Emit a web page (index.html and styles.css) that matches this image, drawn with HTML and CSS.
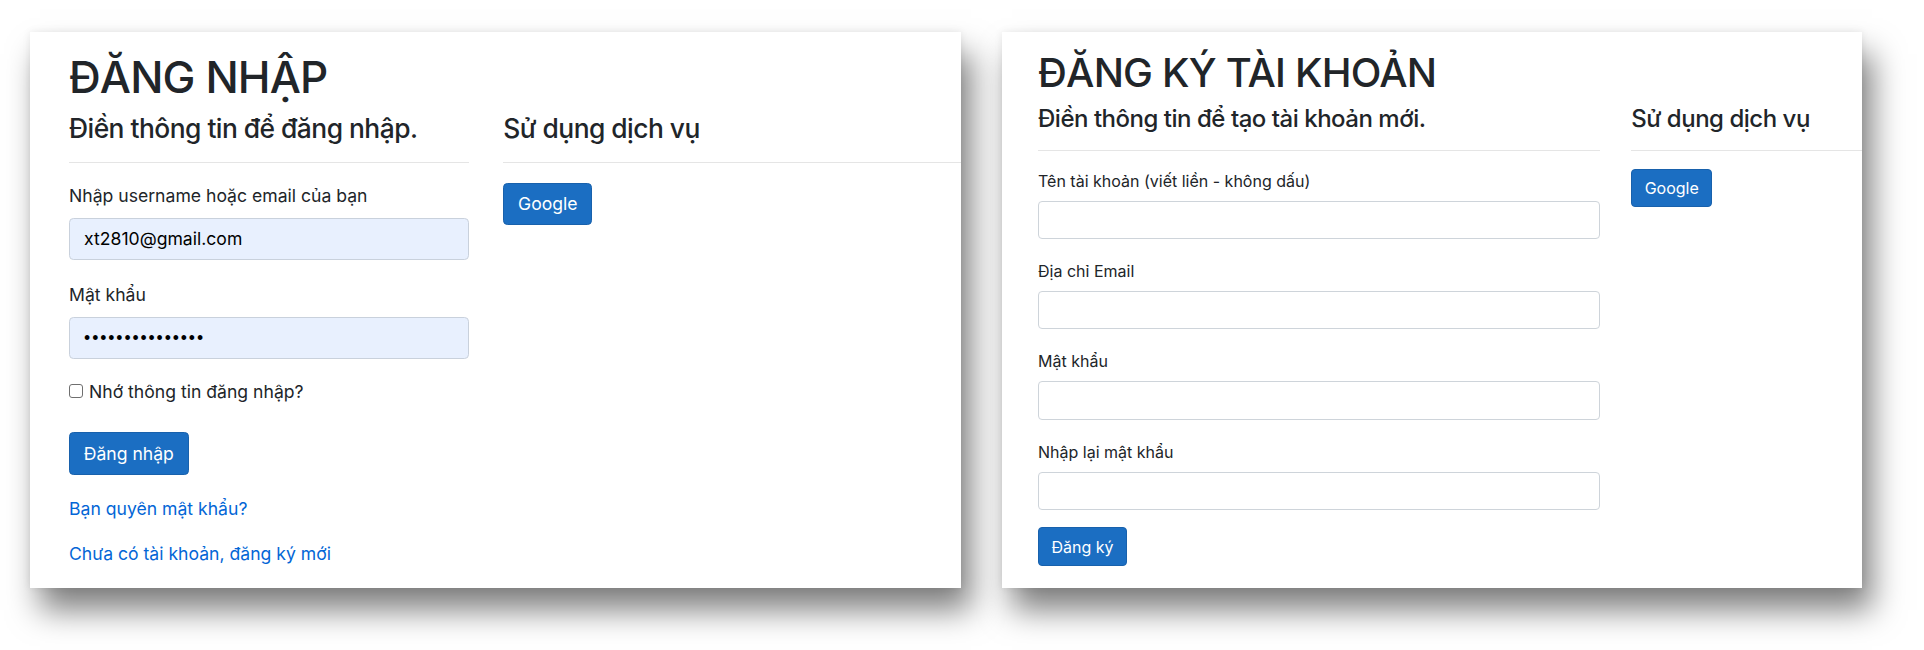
FILE: index.html
```html
<!DOCTYPE html>
<html lang="vi">
<head>
<meta charset="utf-8">
<title>Đăng nhập / Đăng ký</title>
<link rel="stylesheet" href="styles.css">
</head>
<body>
<div class="stage">
  <section class="shot shot--login">
    <h1 class="title">ĐĂNG NHẬP</h1>
    <div class="row">
      <div class="col col--main">
        <h4 class="subtitle">Điền thông tin để đăng nhập.</h4>
        <hr class="rule">
        <form class="form">
          <div class="field">
            <label class="label">Nhập username hoặc email của bạn</label>
            <input class="input input--filled" type="text" value="xt2810@gmail.com">
          </div>
          <div class="field">
            <label class="label">Mật khẩu</label>
            <input class="input input--filled input--secret" type="password" value="passwordpasswor">
          </div>
          <label class="check"><input class="check__box" type="checkbox">Nhớ thông tin đăng nhập?</label>
          <div class="actions actions--login">
            <button class="btn" type="button">Đăng nhập</button>
          </div>
          <div class="links">
            <p class="links__item"><a class="link" href="#">Bạn quyên mật khẩu?</a></p>
            <p class="links__item"><a class="link" href="#">Chưa có tài khoản, đăng ký mới</a></p>
          </div>
        </form>
      </div>
      <div class="col col--side">
        <h4 class="subtitle">Sử dụng dịch vụ</h4>
        <hr class="rule">
        <button class="btn" type="button">Google</button>
      </div>
    </div>
  </section>

  <section class="shot shot--register">
    <h1 class="title">ĐĂNG KÝ TÀI KHOẢN</h1>
    <div class="row">
      <div class="col col--main">
        <h4 class="subtitle">Điền thông tin để tạo tài khoản mới.</h4>
        <hr class="rule">
        <form class="form">
          <div class="field">
            <label class="label">Tên tài khoản (viết liền - không dấu)</label>
            <input class="input" type="text">
          </div>
          <div class="field">
            <label class="label">Địa chỉ Email</label>
            <input class="input" type="text">
          </div>
          <div class="field">
            <label class="label">Mật khẩu</label>
            <input class="input" type="password">
          </div>
          <div class="field">
            <label class="label">Nhập lại mật khẩu</label>
            <input class="input" type="password">
          </div>
          <div class="actions actions--register">
            <button class="btn" type="button">Đăng ký</button>
          </div>
        </form>
      </div>
      <div class="col col--side">
        <h4 class="subtitle">Sử dụng dịch vụ</h4>
        <hr class="rule">
        <button class="btn" type="button">Google</button>
      </div>
    </div>
  </section>
</div>
</body>
</html>
```

FILE: styles.css
```css
html, body {
  margin: 0;
  padding: 0;
  background: #ffffff;
}

body {
  font-family: Inter, "Noto Sans", "Liberation Sans", sans-serif;
  color: #212529;
}

.stage {
  box-sizing: border-box;
  height: 650px;
  display: flex;
  align-items: flex-start;
  gap: 41px;
  padding: 32px 0 0 30px;
  overflow: hidden;
}

.shot {
  box-sizing: border-box;
  flex: none;
  height: 556px;
  overflow: hidden;
  background: #ffffff;
  line-height: 1.5;
  box-shadow: 0 0 8px rgba(0, 0, 0, 0.08), 10px 22px 30px rgba(0, 0, 0, 0.5);
}

.shot--login {
  width: 931px;
  font-size: 17.6px;
  padding: 18.6px 0 0 39px;
}

.shot--register {
  width: 860px;
  font-size: 16px;
  padding: 16.5px 0 0 36px;
}

.title {
  margin: 0 0 0.21em;
  font-size: 2.5em;
  font-weight: 500;
  line-height: 1.2;
  letter-spacing: -0.02em;
}

.row {
  display: flex;
  gap: 1.95em;
}

.shot--login .col--main { width: 400px; }
.shot--register .col--main { width: 562px; }

.col--main { flex: none; }
.col--side { flex: 1; min-width: 0; }

.subtitle {
  margin: 0;
  font-size: 1.5em;
  font-weight: 500;
  line-height: 1.2;
  letter-spacing: -0.02em;
  white-space: nowrap;
}

.rule {
  border: 0;
  border-top: 1px solid rgba(0, 0, 0, 0.1);
  margin: 1em 0 1.12em;
  height: 0;
}

.form {
  display: flex;
  flex-direction: column;
}

.field + .field {
  margin-top: 1.25em;
}

.label {
  display: block;
  margin-bottom: 0.5em;
}

.input {
  display: block;
  box-sizing: border-box;
  width: 100%;
  height: 2.4em;
  margin: 0;
  padding: 0 0.8em;
  font: inherit;
  color: #000;
  background: #ffffff;
  border: 1px solid #ced4da;
  border-radius: 0.25em;
  outline: none;
}

.input--filled {
  background: #e8f0fe;
  border-color: #c9d1dc;
}

.input--secret {
  font-family: "Liberation Sans", Arial, sans-serif;
  letter-spacing: 1.9px;
}

.check {
  display: block;
  margin-top: 1.1em;
}

.check__box {
  -webkit-appearance: none;
  appearance: none;
  box-sizing: border-box;
  width: 14px;
  height: 14px;
  margin: 0 6px 0 0;
  vertical-align: baseline;
  border: 1px solid #6f6f6f;
  border-radius: 3px;
  background: #fff;
}

.actions--login { margin-top: 1.55em; }
.actions--register { margin-top: 1.06em; }

.btn {
  display: inline-block;
  margin: 0;
  padding: 0.4em 0.78em;
  font: inherit;
  line-height: 1.5;
  color: #ffffff;
  background: #1b6ec2;
  border: 1px solid #1861ac;
  border-radius: 0.25em;
  cursor: pointer;
}

.links { margin-top: 1.2em; }

.links__item {
  margin: 0 0 1.05em;
}

.link {
  color: #0366d6;
  text-decoration: none;
}
```
